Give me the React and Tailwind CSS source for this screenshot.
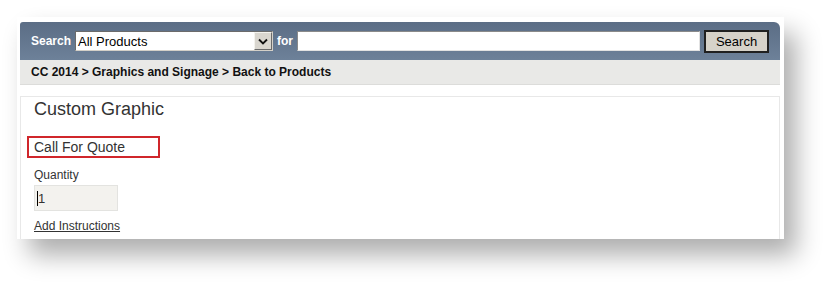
import React from "react";

export default function App() {
  return (
    <div className="w-[832px] h-[287px] bg-white pl-[17px] pt-[17px] overflow-hidden" style={{ fontFamily: '"Liberation Sans", Arial, sans-serif' }}>
      <div className="w-[767px] h-[222px] bg-white pt-[5px] pl-[3px] pr-[4px] flex flex-col shadow-[12px_16px_24px_rgba(0,0,0,0.32)]">
        <div className="h-[38px] shrink-0 rounded-tl-[3px] rounded-tr-[6px] bg-gradient-to-b from-[#5b6d85] to-[#6d8199] flex items-center pl-[11px]">
          <span className="text-white font-bold text-[12px] leading-none">Search</span>
          <div className="ml-[4px] w-[198px] h-[20px] bg-white border border-t-[#6b6b6b] border-l-[#6b6b6b] border-r-[#d4d0c8] border-b-[#d4d0c8] flex items-center">
            <span className="flex-1 pl-[2px] text-[13px] text-black leading-none">All Products</span>
            <div className="w-[18px] h-[18px] bg-[#d9d6cf] border border-t-[#f4f3ee] border-l-[#f4f3ee] border-r-[#6b6b6b] border-b-[#6b6b6b] flex items-center justify-center">
              <svg width="10" height="7" viewBox="0 0 10 7">
                <path d="M1 1.5 L5 5.5 L9 1.5" fill="none" stroke="#111" strokeWidth="1.8" />
              </svg>
            </div>
          </div>
          <span className="ml-[4px] text-white font-bold text-[12px] leading-none">for</span>
          <div className="ml-[4px] w-[403px] h-[20px] bg-white border border-t-[#8a8a8a] border-l-[#8a8a8a] border-r-[#e2e2e2] border-b-[#e2e2e2]" />
          <div className="ml-[4px] w-[65px] h-[23px] bg-[#d6d2c9] border-[2px] border-[#202020] flex items-center justify-center text-[13px] text-black leading-none">
            Search
          </div>
        </div>
        <div className="h-[25px] shrink-0 bg-[#e9e9e7] border-b border-[#dcdcda] flex items-center pl-[11px]">
          <span className="font-bold text-[12px] text-[#111] leading-none">CC 2014 &gt; Graphics and Signage &gt; Back to Products</span>
        </div>
        <div className="mt-[11px] flex-1 border border-[#e8e8e8] border-b-0 pl-[13px] pt-[1px] overflow-hidden">
          <div className="text-[18px] text-[#333] leading-[22px]">Custom Graphic</div>
          <div className="mt-[16px] -ml-[7px] w-[133px] h-[22px] border-[2px] border-[#d0262b] flex items-center pl-[5px]">
            <span className="text-[14px] text-[#333] leading-none">Call For Quote</span>
          </div>
          <div className="mt-[11px] text-[12px] text-[#333] leading-none">Quantity</div>
          <div className="mt-[4px] w-[84px] h-[26px] bg-[#f3f2ee] border border-[#e3e3e0] flex items-center pl-[2px]">
            <span className="w-px h-[15px] bg-black" />
            <span className="text-[13px] text-[#333] leading-none">1</span>
          </div>
          <div className="mt-[8px] text-[12px] text-[#333] underline leading-[14px]">Add Instructions</div>
        </div>
      </div>
    </div>
  );
}
